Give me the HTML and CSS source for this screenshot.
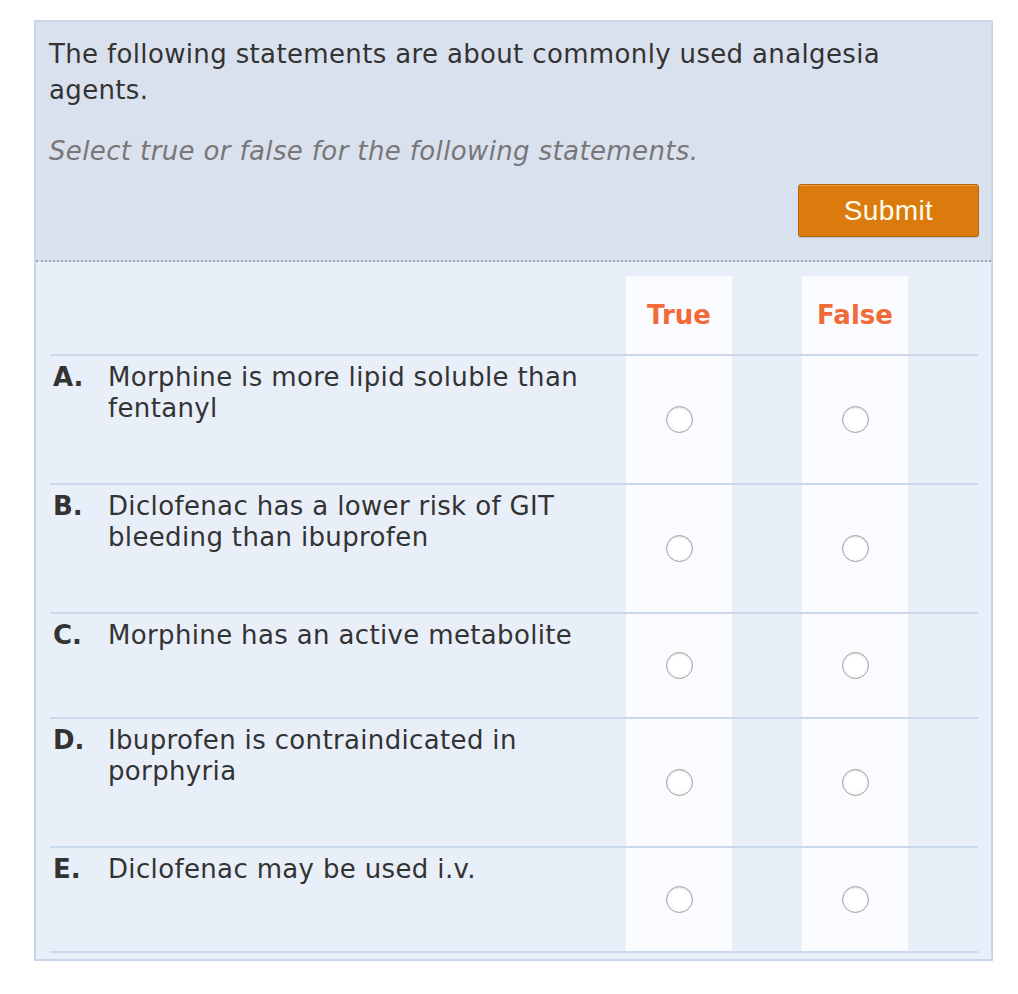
FILE: index.html
```html
<!DOCTYPE html>
<html>
<head>
<meta charset="utf-8">
<link rel="stylesheet" href="styles.css">
</head>
<body>
<div class="card">
  <div class="card-head">
    <p class="question">The following statements are about commonly used analgesia agents.</p>
    <p class="instruction">Select true or false for the following statements.</p>
    <div class="actions"><button class="submit" type="button">Submit</button></div>
  </div>
  <div class="card-body">
    <div class="row row-head">
      <div class="cell-q"></div>
      <div class="cell-opt head">True</div>
      <div class="cell-gap"></div>
      <div class="cell-opt head">False</div>
      <div class="cell-gap"></div>
    </div>
    <div class="row">
      <div class="cell-q"><span class="label">A.</span><span class="stmt">Morphine is more lipid soluble than fentanyl</span></div>
      <div class="cell-opt"><span class="radio"></span></div>
      <div class="cell-gap"></div>
      <div class="cell-opt"><span class="radio"></span></div>
      <div class="cell-gap"></div>
    </div>
    <div class="row">
      <div class="cell-q"><span class="label">B.</span><span class="stmt">Diclofenac has a lower risk of GIT bleeding than ibuprofen</span></div>
      <div class="cell-opt"><span class="radio"></span></div>
      <div class="cell-gap"></div>
      <div class="cell-opt"><span class="radio"></span></div>
      <div class="cell-gap"></div>
    </div>
    <div class="row">
      <div class="cell-q"><span class="label">C.</span><span class="stmt">Morphine has an active metabolite</span></div>
      <div class="cell-opt"><span class="radio"></span></div>
      <div class="cell-gap"></div>
      <div class="cell-opt"><span class="radio"></span></div>
      <div class="cell-gap"></div>
    </div>
    <div class="row">
      <div class="cell-q"><span class="label">D.</span><span class="stmt">Ibuprofen is contraindicated in porphyria</span></div>
      <div class="cell-opt"><span class="radio"></span></div>
      <div class="cell-gap"></div>
      <div class="cell-opt"><span class="radio"></span></div>
      <div class="cell-gap"></div>
    </div>
    <div class="row">
      <div class="cell-q"><span class="label">E.</span><span class="stmt">Diclofenac may be used i.v.</span></div>
      <div class="cell-opt"><span class="radio"></span></div>
      <div class="cell-gap"></div>
      <div class="cell-opt"><span class="radio"></span></div>
      <div class="cell-gap"></div>
    </div>
  </div>
</div>
</body>
</html>
```
FILE: styles.css
```css
html, body {
  margin: 0;
  padding: 0;
  background: #ffffff;
}

body {
  font-family: "DejaVu Sans", Verdana, sans-serif;
  color: #333333;
  padding: 20px 0 0 34px;
}

.card {
  width: 959px;
  box-sizing: border-box;
  border: 2px solid #c9d6e8;
  background: #e9eff8;
}

.card-head {
  background: #dae1ee;
  padding: 14px 12px 23px 13px;
  border-bottom: 2px dotted #9fa3a9;
}

.question {
  margin: 0;
  font-size: 26px;
  line-height: 36px;
  letter-spacing: 0.35px;
  color: #333333;
  width: 880px;
}

.instruction {
  margin: 25px 0 0 0;
  font-size: 26px;
  line-height: 36px;
  letter-spacing: 0.37px;
  font-style: italic;
  color: #777777;
}

.actions {
  display: flex;
  justify-content: flex-end;
  margin-top: 15px;
}

.submit {
  width: 181px;
  height: 53px;
  box-sizing: border-box;
  border: 1px solid #b5650c;
  border-radius: 3px;
  background: #dc7b0d;
  box-shadow: inset 0 1px 0 rgba(255, 200, 120, 0.5), 0 1px 1px rgba(0, 0, 0, 0.15);
  color: #fffbee;
  font-family: "Liberation Sans", Arial, sans-serif;
  font-size: 28px;
  letter-spacing: 0.4px;
  padding: 0;
  cursor: pointer;
}

.card-body {
  padding: 14px 13px 6px 14px;
}

.row {
  display: grid;
  grid-template-columns: 576px 106px 70px 106px 70px;
  border-bottom: 2px solid #c9d8ea;
  min-height: 105px;
  box-sizing: border-box;
}

.row-head {
  min-height: 80px;
  height: 80px;
}

.cell-q {
  display: flex;
  padding: 6px 20px 59px 3px;
  font-size: 26px;
  line-height: 31px;
  letter-spacing: 0.35px;
  color: #333333;
}

.row-head .cell-q {
  padding: 0;
}

.label {
  flex: 0 0 55px;
  font-weight: bold;
  letter-spacing: 0;
  color: #333333;
}

.stmt {
  flex: 1 1 auto;
}

.cell-opt {
  background: #f9fbfe;
  display: flex;
  align-items: center;
  justify-content: center;
}

.head {
  font-size: 26px;
  line-height: 31px;
  font-weight: bold;
  color: #f26a38;
}

.radio {
  display: block;
  width: 27px;
  height: 27px;
  box-sizing: border-box;
  border-radius: 50%;
  border: 1.5px solid #a2a2a2;
  background: radial-gradient(circle at 50% 40%, #ffffff 55%, #eeeeee 100%);
  box-shadow: inset 0 1px 2px rgba(0, 0, 0, 0.15);
}
```
